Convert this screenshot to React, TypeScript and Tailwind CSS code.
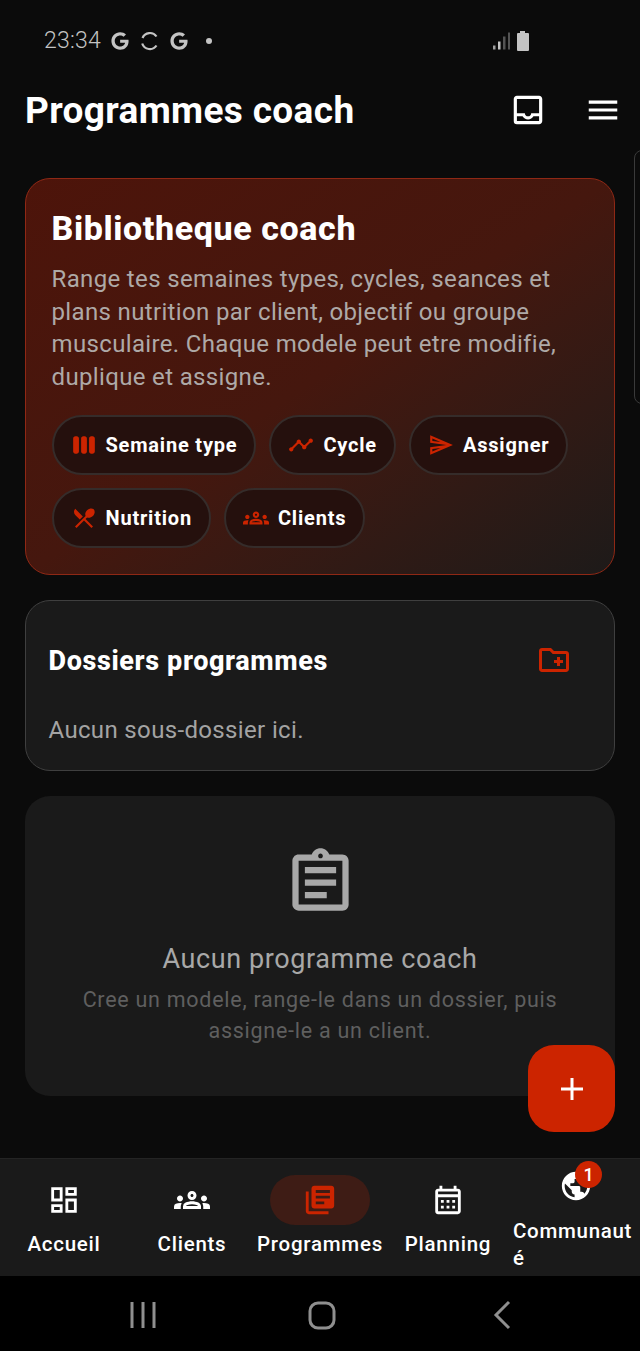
import type { ReactNode } from "react";
import { FaGoogle } from "react-icons/fa";
import {
  MdLibraryBooks,
  MdMenu,
  MdOutlineAssignment,
  MdOutlineCalendarMonth,
  MdOutlineCreateNewFolder,
  MdOutlineDashboard,
  MdOutlineGroups,
  MdOutlineInbox,
  MdOutlineSend,
  MdPublic,
  MdRestaurantMenu,
  MdTimeline,
  MdViewWeek,
} from "react-icons/md";

function Chip({ icon, label }: { icon: ReactNode; label: string }) {
  return (
    <div className="flex h-[60px] items-center gap-[9px] rounded-full border-2 border-[#352c2a] bg-[#25100d] pl-[17px] pr-[17px] text-[20px] font-bold tracking-[0.8px] text-white">
      <span className="text-[#cc2400]">{icon}</span>
      {label}
    </div>
  );
}

function NavItem({ icon, label, active }: { icon: ReactNode; label: string; active?: boolean }) {
  return (
    <div className="flex w-[128px] flex-col items-center">
      <div
        className={`flex h-[50px] w-[100px] items-center justify-center rounded-full ${
          active ? "bg-[#3e1c15] text-[#cc2400]" : "text-white"
        }`}
      >
        {icon}
      </div>
      <div className="mt-[6px] text-[20.5px] font-medium leading-[26px] tracking-[0.75px] text-white">{label}</div>
    </div>
  );
}

export default function App() {
  return (
    <div className="relative flex h-[1351px] w-[640px] flex-col overflow-hidden bg-[#0b0b0b] font-['Roboto',sans-serif]">
      {/* status bar */}
      <div className="flex h-[81px] items-center pl-[44px] pr-[110px] text-[#c4c4c4]">
        <span className="pt-[2px] text-[23px] font-light tracking-[0.2px]">23:34</span>
        <FaGoogle size={18} className="ml-[10px]" />
        <svg width="20" height="20" viewBox="0 0 20 20" className="ml-[11px]" fill="none" stroke="currentColor" strokeWidth="2.2">
          <path d="M16.5 5.5A8 8 0 0 0 2.5 7M2.2 12.5a8 8 0 0 0 14.3 2" />
        </svg>
        <FaGoogle size={18} className="ml-[10px]" />
        <span className="ml-[18px] h-[6px] w-[6px] rounded-full bg-[#c4c4c4]" />
        <svg width="18" height="20" viewBox="0 0 18 20" className="ml-auto" fill="currentColor">
          <rect x="1" y="14.5" width="2.5" height="4" opacity="0.8" />
          <rect x="6" y="10.5" width="2.5" height="8" />
          <rect x="11" y="5.5" width="2.5" height="13" opacity="0.4" />
          <rect x="16" y="1.5" width="2" height="17" opacity="0.4" />
        </svg>
        <svg width="14" height="20" viewBox="0 0 14 20" className="ml-[6px]" fill="currentColor">
          <path d="M4 0h5v2h3a1 1 0 0 1 1 1v16a1 1 0 0 1-1 1H2a1 1 0 0 1-1-1V3a1 1 0 0 1 1-1h2z" />
        </svg>
      </div>

      {/* header */}
      <div className="flex h-[58px] items-center pl-[25px] pr-[18px] text-white">
        <h1 className="text-[37px] font-bold leading-none tracking-[0.35px]">Programmes coach</h1>
        <MdOutlineInbox size={38} className="ml-auto" />
        <MdMenu size={38} className="ml-[37px]" />
      </div>

      {/* content */}
      <div className="flex flex-col gap-[25px] px-[25px] pt-[39px]">
        <section className="h-[397px] rounded-[25px] border-[1.5px] border-[#8f2815] bg-gradient-to-br from-[#4d140a] via-[#45170e] to-[#1d1a19] px-[25.5px] pt-[29px]">
          <h2 className="text-[34px] font-extrabold leading-[40px] tracking-[0.6px] text-white">Bibliotheque coach</h2>
          <p className="mt-[15px] text-[24px] leading-[32.5px] tracking-[0.35px] text-[#aea9a7]">
            Range tes semaines types, cycles, seances et plans nutrition par client, objectif ou groupe musculaire.
            Chaque modele peut etre modifie, duplique et assigne.
          </p>
          <div className="mt-[22px] flex flex-wrap gap-x-[13px] gap-y-[13px]">
            <Chip icon={<MdViewWeek size={26} />} label="Semaine type" />
            <Chip icon={<MdTimeline size={26} />} label="Cycle" />
            <Chip icon={<MdOutlineSend size={26} />} label="Assigner" />
            <Chip icon={<MdRestaurantMenu size={26} />} label="Nutrition" />
            <Chip icon={<MdOutlineGroups size={26} />} label="Clients" />
          </div>
        </section>

        <section className="h-[171px] rounded-[25px] border-[1.5px] border-[#3f3f3f] bg-[#1a1a1a] pl-[22.5px] pr-[42px] pt-[30px]">
          <div className="flex h-[60px] items-start justify-between">
            <h2 className="text-[27px] font-extrabold leading-[60px] tracking-[0.62px] text-white">Dossiers programmes</h2>
            <MdOutlineCreateNewFolder size={36} className="mt-[11px] text-[#cc2400]" />
          </div>
          <p className="mt-[23px] text-[24px] leading-[32px] tracking-[0.35px] text-[#a3a3a3]">Aucun sous-dossier ici.</p>
        </section>

        <section className="flex h-[300px] flex-col items-center rounded-[25px] bg-[#1a1a1a] pt-[49px]">
          <MdOutlineAssignment size={75} className="text-[#a8a8a8]" />
          <h3 className="mt-[21px] text-[27px] leading-[36px] tracking-[0.6px] text-[#a8a8a8]">Aucun programme coach</h3>
          <p className="mt-[7px] w-[500px] text-center text-[21.5px] leading-[31px] tracking-[0.73px] text-[#5f5f5f]">
            Cree un modele, range-le dans un dossier, puis assigne-le a un client.
          </p>
        </section>
      </div>

      {/* next card peeking on the right edge */}
      <div className="absolute left-[634px] top-[150px] h-[254px] w-[20px] rounded-[8px] border border-[#3a3a3a]" />

      {/* add button */}
      <button className="absolute left-[528px] top-[1045px] flex h-[87px] w-[87px] items-center justify-center rounded-[26px] bg-[#cc2400] text-white">
        <svg width="24" height="24" viewBox="0 0 24 24" fill="none" stroke="currentColor" strokeWidth="3">
          <path d="M12 1v22M1 12h22" />
        </svg>
      </button>

      {/* bottom nav */}
      <nav className="mt-auto flex h-[118px] items-start border-t border-[#242424] bg-[#1a1a1a] pt-[16px]">
        <NavItem icon={<MdOutlineDashboard size={34} />} label="Accueil" />
        <NavItem icon={<MdOutlineGroups size={36} />} label="Clients" />
        <NavItem icon={<MdLibraryBooks size={34} />} label="Programmes" active />
        <NavItem icon={<MdOutlineCalendarMonth size={34} />} label="Planning" />
        <div className="relative flex w-[128px] flex-col items-center">
          <div className="-mt-[6px] flex h-[34px] items-center justify-center text-white">
            <MdPublic size={34} />
          </div>
          <div className="absolute left-[63px] top-[-14px] flex h-[27px] w-[27px] items-center justify-center rounded-full bg-[#cc2400] text-[18px] font-medium text-white">
            1
          </div>
          <div className="mt-[15px] w-[126px] break-all text-[20.5px] font-medium leading-[27px] tracking-[0.7px] text-white">
            Communauté
          </div>
        </div>
      </nav>

      {/* android nav */}
      <div className="flex h-[75px] items-center bg-black text-[#8f8f8f]">
        <svg width="640" height="75" viewBox="0 0 640 75" fill="none" stroke="currentColor" strokeWidth="3">
          <path d="M132 26v26M143 26v26M154 26v26" />
          <rect x="310" y="27" width="24" height="25" rx="8" />
          <path d="M509 26l-13 13 13 13" />
        </svg>
      </div>
    </div>
  );
}
